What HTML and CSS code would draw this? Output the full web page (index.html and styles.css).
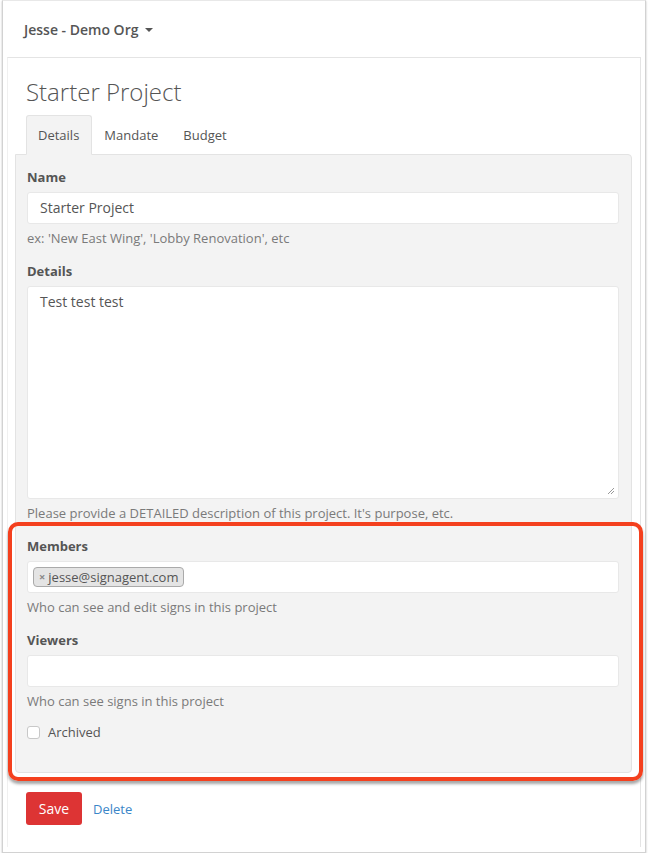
FILE: index.html
```html
<!DOCTYPE html>
<html>
<head>
<meta charset="utf-8">
<link rel="stylesheet" href="styles.css">
</head>
<body>
<div class="window">
  <div class="topbar">
    <span class="org">Jesse - Demo Org</span><span class="caret"></span>
  </div>
  <div class="page">
    <h1 class="title">Starter Project</h1>
    <div class="tabs">
      <div class="tab active">Details</div>
      <div class="tab">Mandate</div>
      <div class="tab">Budget</div>
    </div>
    <div class="tab-panel">
      <div class="group">
        <div class="label">Name</div>
        <div class="input">Starter Project</div>
        <div class="help">ex: 'New East Wing', 'Lobby Renovation', etc</div>
      </div>
      <div class="group">
        <div class="label">Details</div>
        <div class="input textarea">Test test test
          <svg class="grip" width="8" height="8" viewBox="0 0 8 8"><path d="M7 1 L1 7 M7 4 L4 7" stroke="#999" stroke-width="1"/></svg>
        </div>
        <div class="help">Please provide a DETAILED description of this project. It's purpose, etc.</div>
      </div>
      <div class="group">
        <div class="label">Members</div>
        <div class="input tags"><span class="tag"><span class="x">×</span>jesse@signagent.com</span></div>
        <div class="help">Who can see and edit signs in this project</div>
      </div>
      <div class="group last">
        <div class="label">Viewers</div>
        <div class="input"></div>
        <div class="help">Who can see signs in this project</div>
      </div>
      <div class="check-row"><span class="checkbox"></span><span class="check-label">Archived</span></div>
    </div>
    <div class="actions">
      <span class="btn-save">Save</span>
      <span class="link-delete">Delete</span>
    </div>
  </div>
  <div class="highlight"></div>
</div>
</body>
</html>
```
FILE: styles.css
```css
* { box-sizing: border-box; }
html, body { margin: 0; padding: 0; background: #fff; }
body { font-family: "Open Sans", "Liberation Sans", sans-serif; color: #555; }

.window {
  position: relative;
  margin: 0 2px 0 2px;
  height: 853px;
  border: 1px solid #d2d2d2;
  border-top-color: #e8e8e8;
  box-shadow: 0 1px 2px rgba(0,0,0,0.25);
  background: #fff;
}

.topbar {
  height: 56px;
  padding-left: 21px;
  display: flex;
  align-items: center;
  font-size: 14px;
  font-weight: 600;
  color: #555;
}
.caret {
  display: inline-block;
  margin-left: 7px;
  margin-top: 2px;
  border-left: 4px solid transparent;
  border-right: 4px solid transparent;
  border-top: 4px solid #555;
}

.page {
  margin: 0 4px 0 4px;
  height: 790px;
  border: 1px solid #e4e4e4;
  border-left-color: #f0f0f0;
  border-bottom: none;
  padding: 0 8px 0 7px;
}

.title {
  margin: 0;
  padding: 19px 0 0 11px;
  font-size: 24px;
  font-weight: 300;
  line-height: 30px;
  color: #555;
}

.tabs {
  display: flex;
  padding-left: 11px;
  margin-top: 8px;
  margin-bottom: -1px;
  position: relative;
  z-index: 1;
}
.tab {
  height: 40px;
  padding: 0 12px 0 11px;
  display: flex;
  align-items: center;
  font-size: 13px;
  color: #555;
  border: 1px solid transparent;
}
.tab.active {
  background: #f3f3f3;
  border-color: #e3e3e3;
  border-bottom-color: #f3f3f3;
  border-radius: 3px 3px 0 0;
}

.tab-panel {
  background: #f3f3f3;
  border: 1px solid #e3e3e3;
  border-radius: 0 4px 4px 4px;
  padding: 13px 12px 0 11px;
  height: 619px;
}

.group { margin-bottom: 15px; }
.group.last { margin-bottom: 13px; }
.label {
  font-size: 13px;
  font-weight: 700;
  line-height: 18px;
  color: #555;
  margin-bottom: 6px;
}
.input {
  position: relative;
  height: 32px;
  background: #fff;
  border: 1px solid #e8e8e8;
  border-radius: 3px;
  font-size: 14px;
  line-height: 30px;
  padding: 0 12px;
  color: #555;
}
.textarea {
  height: 213px;
  line-height: 20px;
  padding-top: 5px;
}
.grip { position: absolute; right: 3px; bottom: 3px; }
.help {
  margin-top: 5px;
  font-size: 13px;
  line-height: 18px;
  color: #7a7a7a;
}
.tags { padding: 0 5px; display: flex; align-items: center; }
.tag {
  display: inline-flex;
  align-items: center;
  height: 20px;
  padding: 0 5px 0 5px;
  background: #e4e4e4;
  border: 1px solid #aaa;
  border-radius: 4px;
  font-size: 13px;
  color: #555;
  line-height: 18px;
}
.tag .x { color: #888; font-size: 11px; margin-right: 3px; font-weight: 700; }

.check-row {
  display: flex;
  align-items: center;
  font-size: 13px;
  line-height: 18px;
  color: #555;
}
.checkbox {
  width: 13px;
  height: 13px;
  background: #fff;
  border: 1px solid #c8c8c8;
  border-radius: 3px;
  margin-right: 8px;
}

.actions {
  display: flex;
  align-items: center;
  margin-top: 19px;
  padding-left: 11px;
}
.btn-save {
  display: inline-flex;
  align-items: center;
  justify-content: center;
  width: 56px;
  height: 33px;
  background: #dd3434;
  border-radius: 3px;
  color: #fff;
  font-size: 14px;
}
.link-delete {
  margin-left: 11px;
  font-size: 13px;
  color: #3a86c8;
}

.highlight {
  position: absolute;
  left: 5px;
  top: 521px;
  width: 635px;
  height: 259px;
  border: 4px solid #f4401e;
  border-radius: 10px;
  box-shadow: 0 3px 3px rgba(0,0,0,0.35);
  pointer-events: none;
}
```
